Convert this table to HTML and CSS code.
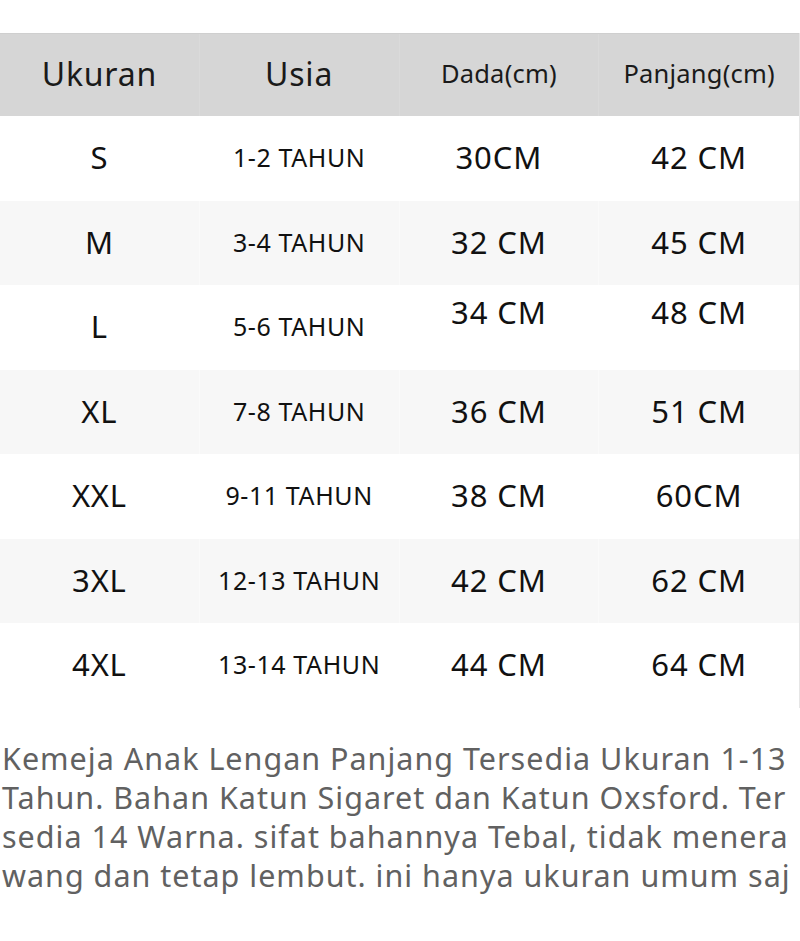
FILE: index.html
```html
<!DOCTYPE html>
<html lang="id">
<head>
<meta charset="utf-8">
<title>Ukuran</title>
<link rel="stylesheet" href="styles.css">
</head>
<body>
<div class="page">
  <div class="table">
    <div class="row head">
      <div class="cell big">Ukuran</div>
      <div class="cell big">Usia</div>
      <div class="cell small">Dada(cm)</div>
      <div class="cell small">Panjang(cm)</div>
    </div>
    <div class="row">
      <div class="cell size">S</div>
      <div class="cell age">1-2 TAHUN</div>
      <div class="cell meas">30CM</div>
      <div class="cell meas">42 CM</div>
    </div>
    <div class="row alt">
      <div class="cell size">M</div>
      <div class="cell age">3-4 TAHUN</div>
      <div class="cell meas">32 CM</div>
      <div class="cell meas">45 CM</div>
    </div>
    <div class="row">
      <div class="cell size">L</div>
      <div class="cell age">5-6 TAHUN</div>
      <div class="cell meas raised">34 CM</div>
      <div class="cell meas raised">48 CM</div>
    </div>
    <div class="row alt">
      <div class="cell size">XL</div>
      <div class="cell age">7-8 TAHUN</div>
      <div class="cell meas">36 CM</div>
      <div class="cell meas">51 CM</div>
    </div>
    <div class="row">
      <div class="cell size">XXL</div>
      <div class="cell age">9-11 TAHUN</div>
      <div class="cell meas">38 CM</div>
      <div class="cell meas">60CM</div>
    </div>
    <div class="row alt">
      <div class="cell size">3XL</div>
      <div class="cell age">12-13 TAHUN</div>
      <div class="cell meas">42 CM</div>
      <div class="cell meas">62 CM</div>
    </div>
    <div class="row">
      <div class="cell size">4XL</div>
      <div class="cell age">13-14 TAHUN</div>
      <div class="cell meas">44 CM</div>
      <div class="cell meas">64 CM</div>
    </div>
  </div>
  <p class="desc">Kemeja Anak Lengan Panjang Tersedia Ukuran 1-13<br>Tahun. Bahan Katun Sigaret dan Katun Oxsford. Ter<br>sedia 14 Warna. sifat bahannya Tebal, tidak menera<br>wang dan tetap lembut. ini hanya ukuran umum saj</p>
</div>
</body>
</html>
```
FILE: styles.css
```css
html, body {
  margin: 0;
  padding: 0;
  background: #ffffff;
}
body {
  font-family: "Noto Sans", "Open Sans", sans-serif;
  color: #111111;
  overflow: hidden;
}
.page {
  width: 800px;
  height: 941px;
  padding-top: 33px;
  box-sizing: border-box;
  overflow: hidden;
}
.table {
  display: flex;
  flex-direction: column;
  border-right: 1px solid #e6e6e6;
}
.row {
  display: grid;
  grid-template-columns: repeat(4, 1fr);
  height: 84.5px;
  background: #ffffff;
}
.row.head {
  height: 83px;
  background: #d6d6d6;
  border-top: 1px solid #cfcfcf;
  box-sizing: border-box;
}
.row.alt {
  background: #f7f7f7;
}
.cell {
  display: flex;
  align-items: center;
  justify-content: center;
  border-right: 1px solid transparent;
  white-space: nowrap;
}
.row.head .cell {
  border-right-color: #dadada;
  color: #1a1a1a;
}
.row.alt .cell {
  border-right-color: #fafafa;
}
.cell:last-child {
  border-right: none;
}
.big {
  font-size: 32px;
  letter-spacing: 0.8px;
  padding-bottom: 4px;
}
.small {
  font-size: 25.5px;
  letter-spacing: 0.2px;
  padding-bottom: 4px;
}
.size {
  font-size: 31px;
  letter-spacing: 0.8px;
  padding-bottom: 2px;
}
.age {
  font-size: 25px;
  letter-spacing: 0.6px;
  padding-bottom: 2px;
}
.meas {
  font-size: 31px;
  letter-spacing: 0.9px;
  padding-bottom: 2px;
}
.meas.raised {
  padding-bottom: 30px;
}
.desc {
  margin: 31px 0 0 0;
  padding-left: 2px;
  font-size: 30.5px;
  line-height: 39px;
  color: #616161;
  white-space: nowrap;
  letter-spacing: 1px;
}
```
